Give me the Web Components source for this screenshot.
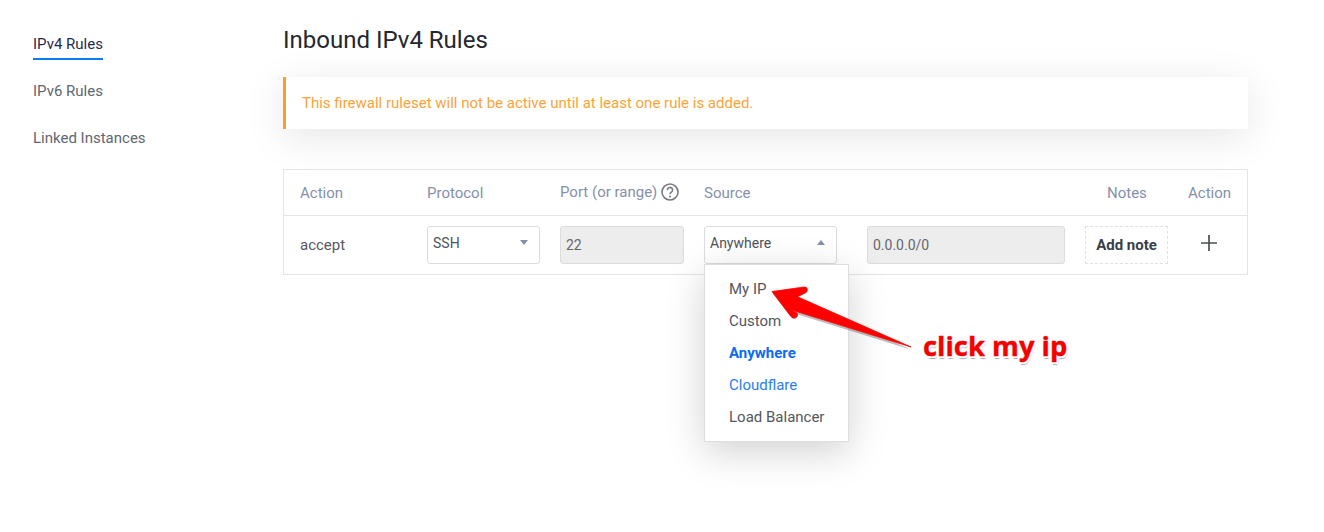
<!DOCTYPE html>
<html lang="en"><head><meta charset="utf-8"><title>Firewall rules</title>
<style>
html,body{margin:0;padding:0;background:#fff}
body{width:1324px;height:532px;overflow:hidden;font-family:Roboto,sans-serif;position:relative}
</style></head><body>
<fw-page></fw-page>
<script>
function el(name, css, html, init){
  customElements.define(name, class extends HTMLElement{
    constructor(){super();this.attachShadow({mode:'open'}).innerHTML='<style>'+css+'</style>'+html;}
    connectedCallback(){ if(init) init(this); }
  });
}
el('side-nav',`
:host{display:flex;flex-direction:column;width:283px;box-sizing:border-box;padding:34px 0 0 33px;flex:none;align-items:flex-start;font-size:15px;color:#606770}
::slotted(*){display:block;line-height:20px;padding:0 0 4px;margin-bottom:21px;border-bottom:2px solid transparent}
::slotted([active]){color:#1f2c4f;border-bottom-color:#0a7cf5}
`,`<slot></slot>`);
el('fw-alert',`
:host{display:flex;align-items:center;box-sizing:border-box;height:52px;border-left:3px solid #f89f2a;padding-left:16px;background:#fff;color:#fba339;font-size:15px;box-shadow:0 8px 40px rgba(0,0,0,.1)}
`,`<slot></slot>`);
el('fw-select',`
:host{display:flex;align-items:center;justify-content:space-between;box-sizing:border-box;height:38px;border:1px solid #d9dbdf;border-radius:3px;background:#fff;padding:0 11px 4px 5px;font-size:14px;color:#4f5359}
i{display:block;width:0;height:0;border-left:4.500px solid transparent;border-right:4.500px solid transparent;border-top:5px solid #8590ab}
:host([open]) i{border-top:0;border-bottom:5px solid #8590ab}
`,`<slot></slot><i></i>`);
el('fw-input',`
:host{display:flex;align-items:center;box-sizing:border-box;height:38px;border:1px solid #dcdcdc;border-radius:3px;background:#ededed;padding:0 5px;font-size:14px;color:#64676c}
`,`<slot></slot>`);
el('fw-menu',`
:host{display:flex;flex-direction:column;position:absolute;left:420px;top:94px;width:145px;height:178px;box-sizing:border-box;background:#fff;border:1px solid #dcdee2;box-shadow:0 10px 36px rgba(0,0,0,.18);padding:8px 0 0 24px;font-size:15px;color:#53575e;z-index:3}
::slotted(*){display:block;height:32px;line-height:32px;white-space:nowrap}
`,`<slot></slot>`);
el('fw-table',`
:host{display:block;position:relative;box-sizing:border-box;margin-top:40px;border:1px solid #e3e5e8;height:106px}
.r{display:grid;grid-template-columns:127px 133px 144px 163px 218px 103px 1fr;padding-left:16px;align-items:center}
.h{height:45px;border-bottom:1px solid #e3e5e8;color:#8590ab;font-size:15px;line-height:18px}
.b{height:57px;padding-bottom:2px;font-size:15px;color:#54585f}
.port{display:flex;align-items:center;gap:4px;margin-top:-2px;white-space:nowrap}
.q{width:18px;height:18px;flex:none;display:block}
.note{box-sizing:border-box;width:83px;height:38px;border:1px dashed #dfe1e5;display:flex;align-items:center;justify-content:center;font-weight:700;font-size:15px;color:#3a3f47}
.notes-h{padding-left:22px}
.plus{display:block;margin:-3px 0 0 13px;width:16px;height:16px}
`,`
<div class="r h"><span>Action</span><span>Protocol</span>
<span class="port">Port (or range)<svg class="q" viewBox="0 0 18 18" fill="none"><circle cx="9" cy="9" r="8" stroke="#777a80" stroke-width="1.600"/><path d="M6.4 7.1a2.6 2.6 0 1 1 4 2.100c-.9.6-1.400 1-1.400 2" stroke="#777a80" stroke-width="1.600"/><circle cx="9" cy="13.600" r="1.050" fill="#777a80"/></svg></span>
<span>Source</span><span></span><span class="notes-h">Notes</span><span>Action</span></div>
<div class="r b"><span>accept</span>
<fw-select style="width:113px">SSH</fw-select>
<fw-input style="width:124px">22</fw-input>
<fw-select open style="width:133px">Anywhere</fw-select>
<fw-input style="width:198px">0.0.0.0/0</fw-input>
<span class="note">Add note</span>
<svg class="plus" viewBox="0 0 16 16"><path d="M8 0v16M0 8h16" stroke="#4a4f57" stroke-width="1.700"/></svg></div>
<fw-menu><span>My IP</span><span>Custom</span><span style="color:#0a6cf5;font-weight:700">Anywhere</span><span style="color:#2a7ef0">Cloudflare</span><span>Load Balancer</span></fw-menu>
`);
el('fw-callout',`
:host{display:block;position:absolute;left:0;top:0;width:1324px;height:532px;pointer-events:none;z-index:5}
svg{position:absolute;left:760px;top:275px;overflow:visible}
span{position:absolute;left:923px;top:327px;font:700 27.4px/38px "Open Sans",sans-serif;color:#f50000;-webkit-text-stroke:.4px #f50000;white-space:nowrap;text-shadow:2px 0 0 #fff,-2px 0 0 #fff,0 2px 0 #fff,0 -2px 0 #fff,1.500px 1.500px 0 #fff,-1.500px -1.500px 0 #fff,1.500px -1.500px 0 #fff,-1.500px 1.500px 0 #fff,1px 3px 1px #aaa}
`,`
<svg width="170" height="90" viewBox="760 275 170 90">
<path d="M773 292 L805 287 Q808 288 806 292 L798 296 L911 348 L792 311 L798 314 Q797 319 793 317 Z" fill="#555" opacity=".4" transform="translate(-.5 1.500)"/>
<path d="M772 291.500 L804 287 Q808.500 287 807 291.500 Q806 293 797 296.500 L911 347 L790 309.500 L797 313 Q799 317 794 318 Q792 318 790.500 316 Z" fill="#f00" stroke="#f00" stroke-width=".8" stroke-linejoin="round"/></svg>
<span>click my ip</span>`);
el('fw-page',`
:host{display:flex;width:1324px;height:532px;position:relative}
main{width:965px;padding-top:26px}
h1{margin:0 0 22px;font-weight:400;font-size:24px;line-height:29px;color:#23272e}
`,`
<side-nav><span active>IPv4 Rules</span><span>IPv6 Rules</span><span>Linked Instances</span></side-nav>
<main><h1>Inbound IPv4 Rules</h1>
<fw-alert>This firewall ruleset will not be active until at least one rule is added.</fw-alert>
<fw-table></fw-table></main>
<fw-callout></fw-callout>`);
</script>
</body></html>
